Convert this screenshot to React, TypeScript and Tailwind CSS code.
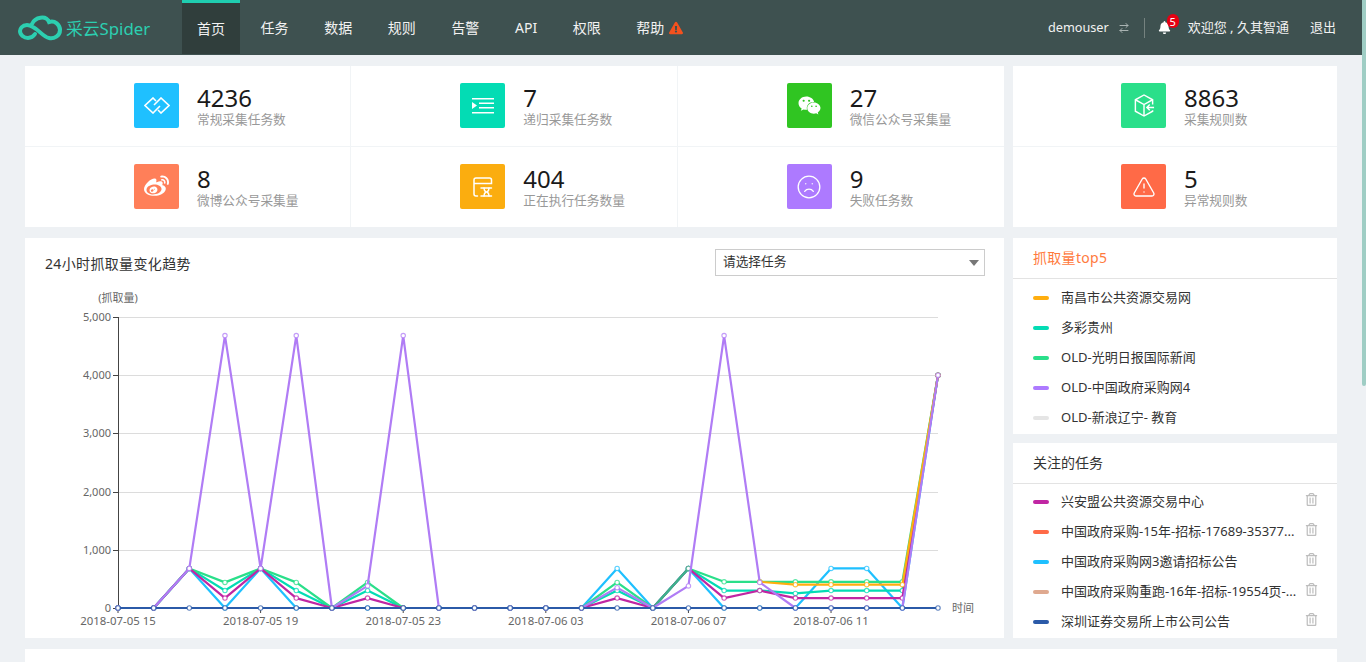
import { FaBell, FaExclamationTriangle, FaWeibo, FaWeixin, FaRegTrashAlt } from "react-icons/fa";
import { Frown, TriangleAlert, ArrowRightLeft } from "lucide-react";
import type { ReactNode } from "react";

const font = `"Noto Sans", "Noto Sans CJK SC", sans-serif`;

const nav = ["首页", "任务", "数据", "规则", "告警", "API", "权限", "帮助"];

const BracketIcon = () => (
  <svg width="26" height="17" viewBox="-1 -1 26 17" fill="none" stroke="white" strokeWidth="1.6">
    <path d="M11 3 L8 0 L0 7.5 L8 15 L15 8" />
    <path d="M13 12 L16 15 L24 7.5 L16 0 L9 7" />
  </svg>
);

const IndentIcon = () => (
  <svg width="22" height="16" viewBox="0 0 22 16" fill="white">
    <rect x="0" y="0" width="22" height="1.5" />
    <rect x="7" y="4.5" width="15" height="1.5" />
    <rect x="7" y="9" width="15" height="1.5" />
    <rect x="0" y="14" width="22" height="1.5" />
    <path d="M0 4 L5 7.5 L0 11 Z" />
  </svg>
);

const ScrollIcon = () => (
  <svg width="20" height="20" viewBox="0 0 20 20" fill="none" stroke="white" strokeWidth="1.5" strokeLinecap="round">
    <path d="M1 6.5 H18.5 V3 Q18.5 1 16.5 1 H3 Q1 1 1 3 V17 Q1 19 3 19 H4.5" />
    <path d="M8 11 H18.5 M8 19 H18.5" />
    <path d="M11 11 Q11 14 13 15 Q11 16 11 19 M16 11 Q16 14 14 15 Q16 16 16 19" />
  </svg>
);

const BoxIcon = () => (
  <svg width="22" height="23" viewBox="0 0 22 24" fill="none" stroke="white" strokeWidth="1.5">
    <path d="M20 11 V6 L11 1 L2 6 V18 L11 23 L20 18 V17" />
    <path d="M2 6 L11 11 L20 6 M11 11 V23" />
    <path d="M21.5 14 H14 M17 11 L14 14 L17 17" />
  </svg>
);

type Stat = { n: string; l: string; bg: string; icon: ReactNode };

const left: Stat[] = [
  { n: "4236", l: "常规采集任务数", bg: "bg-[#1fc0ff]", icon: <BracketIcon /> },
  { n: "7", l: "递归采集任务数", bg: "bg-[#03dcb4]", icon: <IndentIcon /> },
  { n: "27", l: "微信公众号采集量", bg: "bg-[#30c522]", icon: <FaWeixin size={23} color="white" /> },
  { n: "8", l: "微博公众号采集量", bg: "bg-[#ff7f59]", icon: <FaWeibo size={25} color="white" /> },
  { n: "404", l: "正在执行任务数量", bg: "bg-[#fbad0f]", icon: <ScrollIcon /> },
  { n: "9", l: "失败任务数", bg: "bg-[#ad7aff]", icon: <Frown size={26} color="white" strokeWidth={1.2} /> },
];
const right: Stat[] = [
  { n: "8863", l: "采集规则数", bg: "bg-[#2adf8a]", icon: <BoxIcon /> },
  { n: "5", l: "异常规则数", bg: "bg-[#ff6a47]", icon: <TriangleAlert size={24} color="white" strokeWidth={1.4} /> },
];

function StatCell({ s, pl, border }: { s: Stat; pl: string; border: string }) {
  return (
    <div className={`flex h-[80.5px] items-center gap-[18px] border-[#f1f4f6] ${pl} ${border}`}>
      <div className={`flex h-[45px] w-[45px] items-center justify-center rounded-[2px] ${s.bg}`}>{s.icon}</div>
      <div className="flex flex-col pt-[3px]">
        <span className="text-[24px] leading-[24px] text-[#1a1a1a]">{s.n}</span>
        <span className="text-[12.7px] leading-[18px] text-[#999]">{s.l}</span>
      </div>
    </div>
  );
}

const top5: [string, string][] = [
  ["#ffae0f", "南昌市公共资源交易网"],
  ["#03dcb4", "多彩贵州"],
  ["#2adf8a", "OLD-光明日报国际新闻"],
  ["#ad7aff", "OLD-中国政府采购网4"],
  ["#e5e5e5", "OLD-新浪辽宁- 教育"],
];
const follow: [string, string][] = [
  ["#c026a3", "兴安盟公共资源交易中心"],
  ["#ff6a47", "中国政府采购-15年-招标-17689-35377..."],
  ["#1fc0ff", "中国政府采购网3邀请招标公告"],
  ["#dfa98f", "中国政府采购重跑-16年-招标-19554页-..."],
  ["#2b5aa8", "深圳证券交易所上市公司公告"],
];

const X0 = 118;
const DX = (938 - 118) / 23;
const Y0 = 608;
const yOf = (v: number) => Y0 - (v / 5000) * 291;

const zero = (o: Record<number, number>) => Array.from({ length: 24 }, (_, i) => o[i] ?? 0);
const series: [string, number[], number][] = [
  ["#1fc0ff", zero({ 2: 680, 4: 680, 14: 680, 16: 680, 20: 680, 21: 680, 23: 4000 }), 0],
  ["#03dcb4", zero({ 2: 680, 3: 300, 4: 680, 5: 300, 7: 300, 14: 300, 16: 680, 17: 300, 18: 300, 19: 250, 20: 300, 21: 300, 22: 300, 23: 4000 }), 0],
  ["#2adf8a", zero({ 2: 680, 3: 440, 4: 680, 5: 440, 7: 440, 14: 440, 16: 680, 17: 450, 18: 450, 19: 450, 20: 450, 21: 450, 22: 450, 23: 4000 }), 0],
  ["#c026a3", zero({ 2: 680, 3: 170, 4: 680, 5: 170, 7: 170, 14: 170, 16: 680, 17: 170, 18: 300, 19: 170, 20: 170, 21: 170, 22: 170, 23: 4000 }), 0],
  ["#ffae0f", zero({ 18: 450, 19: 400, 20: 400, 21: 400, 22: 400, 23: 4000 }), 18],
  ["#3bb58a", zero({ 16: 680 }).slice(0, 17), 15],
  ["#b07cf5", zero({ 2: 680, 3: 4680, 4: 680, 5: 4680, 7: 380, 8: 4680, 14: 350, 16: 380, 17: 4680, 18: 440, 23: 4000 }), 0],
  ["#2b5aa8", zero({}), 0],
];

function Chart() {
  const labels = ["2018-07-05 15", "2018-07-05 19", "2018-07-05 23", "2018-07-06 03", "2018-07-06 07", "2018-07-06 11"];
  return (
    <svg width="979" height="348" viewBox="25 290 979 348" fontFamily={font} className="block">
      {[1000, 2000, 3000, 4000, 5000].map((v) => (
        <line key={v} x1={X0} x2={938} y1={Math.round(yOf(v)) + 0.5} y2={Math.round(yOf(v)) + 0.5} stroke="#dcdcdc" />
      ))}
      <line x1={118.5} x2={118.5} y1={317} y2={608} stroke="#444" />
      {[0, 1000, 2000, 3000, 4000, 5000].map((v) => (
        <g key={v}>
          <line x1={113} x2={118} y1={Math.round(yOf(v)) + 0.5} y2={Math.round(yOf(v)) + 0.5} stroke="#444" />
          <text x={111} y={yOf(v) + 4} textAnchor="end" fontSize="11" fill="#666">
            {v.toLocaleString("en-US")}
          </text>
        </g>
      ))}
      {labels.map((l, i) => (
        <g key={l}>
          <line x1={X0 + i * 4 * DX} x2={X0 + i * 4 * DX} y1={608} y2={613} stroke="#444" />
          <text x={X0 + i * 4 * DX} y={625} textAnchor="middle" fontSize="11.4" fill="#666">
            {l}
          </text>
        </g>
      ))}
      <text x={118} y={302} textAnchor="middle" fontSize="11" fill="#666">(抓取量)</text>
      <text x={952} y={612} fontSize="11" fill="#666">时间</text>
      {series.map(([c, vals, start]) => (
        <g key={c}>
          <polyline
            fill="none"
            stroke={c}
            strokeWidth="2.2"
            strokeLinejoin="round"
            points={vals.map((v, i) => (i < start ? "" : `${X0 + i * DX},${yOf(v)}`)).join(" ")}
          />
          {vals.map((v, i) =>
            i < start ? null : (
              <circle key={i} cx={X0 + i * DX} cy={yOf(v)} r="2.2" fill="white" stroke={c} strokeOpacity="0.75" strokeWidth="1.1" />
            ),
          )}
        </g>
      ))}
    </svg>
  );
}

export default function App() {
  return (
    <div className="flex h-[662px] overflow-hidden bg-[#eef1f4]" style={{ fontFamily: font }}>
      <div className="min-w-0 flex-1">
        <header className="flex h-[55px] items-center bg-[#3e5150] pr-[26px]">
          <div className="flex w-[182px] shrink-0 items-center self-stretch pl-[17px]">
            <svg width="46" height="28" viewBox="17 11 46 28" fill="none" stroke="#2ccfb0" strokeWidth="4" strokeLinecap="round">
              <path d="M32 21 C35 14 46 12 49 19 C55 17 60 22 60 27 C60 33 54 36 49 35 C42 34 36 22 27 22 C22 22 20 26 20 28 C20 32 24 35 28 35 C31 35 33 34 35 31" />
            </svg>
            <span className="ml-[3px] mt-[3px] text-[16.8px] text-[#2ccfb0]">采云Spider</span>
          </div>
          <nav className="flex gap-[5.6px] self-stretch">
            {nav.map((n, i) => (
              <a
                key={n}
                className={`flex items-center gap-[5px] px-[15px] text-[14px] text-[#f2f2f2] ${
                  i === 0 ? "mb-px border-t-[3px] border-[#1fcdb0] bg-[#303e3c]" : ""
                }`}
              >
                {n}
                {n === "帮助" && <FaExclamationTriangle size={14} color="#f4511e" />}
              </a>
            ))}
          </nav>
          <div className="ml-auto flex items-center text-[13px] text-[#f2f2f2]">
            <span className="text-[12.7px]">demouser</span>
            <ArrowRightLeft size={12} color="#a9b3b2" className="ml-[9px]" />
            <span className="ml-[14px] h-[20px] w-px bg-[#75827f]" />
            <span className="relative ml-[13px] flex">
              <FaBell size={13} color="white" />
              <span className="absolute left-[9px] top-[-7px] flex h-[14px] w-[12px] items-center justify-center rounded-full bg-[#e60012] text-[11px] leading-none text-white">
                5
              </span>
            </span>
            <span className="ml-[17px] whitespace-pre">欢迎您 , 久其智通</span>
            <span className="ml-[21px]">退出</span>
          </div>
        </header>

        <main className="flex flex-col gap-[11px] px-[25px] pt-[11px]">
          <section className="flex gap-[9px]">
            <div className="grid h-[161px] w-[979px] grid-cols-3 bg-white">
              {left.map((s, i) => (
                <StatCell
                  key={s.n}
                  s={s}
                  pl="pl-[109px]"
                  border={`${i % 3 !== 2 ? "border-r" : ""} ${i < 3 ? "border-b" : ""}`}
                />
              ))}
            </div>
            <div className="h-[161px] w-[324px] bg-white">
              {right.map((s, i) => (
                <StatCell key={s.n} s={s} pl="pl-[108px]" border={i === 0 ? "border-b" : ""} />
              ))}
            </div>
          </section>

          <section className="flex gap-[9px]">
            <div className="h-[400px] w-[979px] bg-white">
              <div className="flex h-[52px] items-center justify-between pl-[20px] pr-[19px]">
                <span className="mb-[1px] text-[14px] tracking-[0.35px] text-[#333]">24小时抓取量变化趋势</span>
                <div className="mb-[4px] flex h-[27px] w-[270px] items-center justify-between border border-[#ccc] pl-[7px] pr-[5px] text-[12.7px] text-[#333]">
                  请选择任务
                  <span className="mt-[2px] h-0 w-0 border-x-[5.5px] border-t-[6px] border-x-transparent border-t-[#777]" />
                </div>
              </div>
              <Chart />
            </div>
            <div className="flex w-[324px] flex-col gap-[9px]">
              <div className="h-[196px] bg-white">
                <div className="flex h-[41px] items-center border-b border-[#e3e3e3] pb-[2px] pl-[20px] text-[14px] tracking-[0.3px] text-[#ff7a3d]">
                  抓取量top5
                </div>
                <ul className="pt-[4px]">
                  {top5.map(([c, t]) => (
                    <li key={t} className="flex h-[30px] items-center pl-[20px] text-[13px] text-[#333]">
                      <span className="mr-[12px] h-[3.5px] w-[16px] rounded-full" style={{ background: c }} />
                      {t}
                    </li>
                  ))}
                </ul>
              </div>
              <div className="h-[195px] bg-white">
                <div className="flex h-[41px] items-center border-b border-[#e3e3e3] pb-[2px] pl-[20px] text-[14px] text-[#333]">
                  关注的任务
                </div>
                <ul className="pt-[3px]">
                  {follow.map(([c, t]) => (
                    <li key={t} className="relative flex h-[30px] items-center pl-[20px] text-[13px] text-[#333]">
                      <span className="mr-[12px] h-[3.5px] w-[16px] rounded-full" style={{ background: c }} />
                      <span className="whitespace-nowrap">{t}</span>
                      <FaRegTrashAlt size={13} color="#bdbdbd" className="absolute right-[19px] top-[6px]" />
                    </li>
                  ))}
                </ul>
              </div>
            </div>
          </section>

          <section className="h-[40px] bg-white" />
        </main>
      </div>
      <div className="w-[4px] shrink-0 bg-[#eef1f4]">
        <div className="h-[386px] rounded-b-[2px] bg-[#9fcdc4]" />
      </div>
    </div>
  );
}
